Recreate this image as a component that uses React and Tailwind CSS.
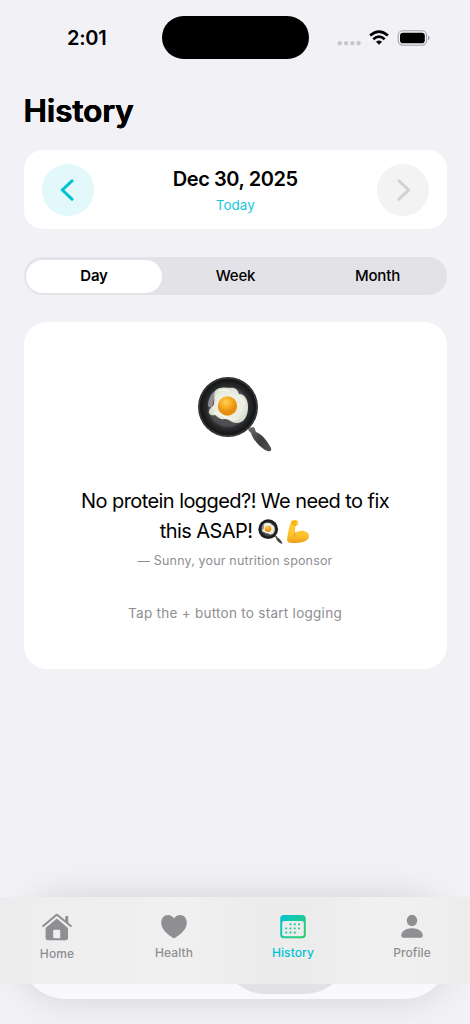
import { useState } from "react";

const periods = [
  { label: "Day", width: "w-[136px]" },
  { label: "Week", width: "w-[147px]" },
  { label: "Month", width: "w-[137px]" },
];

function StatusBar() {
  return (
    <header className="relative flex h-[76px] shrink-0 items-center">
      <span className="ml-[67px] w-[95px] text-[20px] font-semibold leading-none tracking-[-0.3px]">
        2:01
      </span>
      <div className="mt-[-1px] h-[43px] w-[147px] rounded-full bg-black" />
      <svg className="ml-[27px]" width="96" height="20" viewBox="0 0 96 20">
        <g fill="#c5c5c9">
          <rect x="1.7" y="13.2" width="4" height="4" rx="1.4" />
          <rect x="8.1" y="13.2" width="4" height="4" rx="1.4" />
          <rect x="14.4" y="13.2" width="4" height="4" rx="1.4" />
          <rect x="20.6" y="13.2" width="4" height="4" rx="1.4" />
        </g>
        <g fill="none" stroke="#000" strokeWidth="2.7">
          <path d="M34.1 7.5Q43 -0.3 51.9 7.5" />
          <path d="M37.3 11.2Q43 6 48.7 11.2" />
        </g>
        <path d="M40.3 13.7Q43 11.7 45.7 13.7L43 16.5Z" fill="#000" stroke="#000" strokeWidth=".5" strokeLinejoin="round" />
        <rect x="62.2" y="2.8" width="28.4" height="14.4" rx="4.6" fill="none" stroke="#a4a1a8" strokeWidth="1.1" />
        <rect x="64" y="4.7" width="24.8" height="10.6" rx="3.1" fill="#000" />
        <path d="M92.1 7.7v4.6q1.5-.5 1.5-2.3t-1.5-2.3Z" fill="#a09da5" />
      </svg>
    </header>
  );
}

function FryingPan({ className }) {
  return (
    <svg className={className} viewBox="0 0 76 76" fill="none">
      <defs>
        <radialGradient id="pan" cx="50%" cy="50%" r="50%">
          <stop offset="0" stopColor="#77747a" />
          <stop offset=".55" stopColor="#454446" />
          <stop offset=".75" stopColor="#262728" />
          <stop offset=".9" stopColor="#151616" />
          <stop offset="1" stopColor="#303132" />
        </radialGradient>
        <radialGradient id="egg">
          <stop offset="0" stopColor="#f9f8ea" />
          <stop offset=".75" stopColor="#e9ece0" />
          <stop offset="1" stopColor="#d9dfd0" />
        </radialGradient>
        <radialGradient id="yolk" cx="42%" cy="30%">
          <stop offset="0" stopColor="#ffd05a" />
          <stop offset=".6" stopColor="#f8ab20" />
          <stop offset="1" stopColor="#e78e10" />
        </radialGradient>
        <linearGradient id="panHandle" x1="51" y1="54" x2="74" y2="76" gradientUnits="userSpaceOnUse">
          <stop stopColor="#6c6c6d" />
          <stop offset=".5" stopColor="#3b3c3d" />
          <stop offset="1" stopColor="#505152" />
        </linearGradient>
      </defs>
      <path d="M51 50l5 5" stroke="#b8b8b8" strokeWidth="3" />
      <path
        d="M51 54q1-2 5-3c2 0 2 3 3 5 6 2 12 10 15 16 1 4-2 4-6 2-6-4-12-10-14-17Z"
        fill="url(#panHandle)"
      />
      <circle cx="31" cy="31" r="30" fill="url(#pan)" />
      <circle cx="31" cy="31" r="28.8" stroke="#4e4e4f" strokeWidth=".8" opacity=".7" />
      <circle cx="31" cy="31" r="20" fill="#575459" opacity=".65" />
      <path d="M11 30c0-8 4-15 10-17-3 8-5 12-6 19Z" fill="#b7b1b7" opacity=".65" />
      <path
        d="M19 14c3-3 8-3 14-2 5-1 8 2 9 6 6 0 9 6 9 13 0 5-1 9-4 13-3 3-8 4-12 2-3-2-4-3-8-3-4 1-6-2-9-4-4 1-7-1-6-4 1-4 5-4 5-8 1-4-1-9 2-13Z"
        fill="url(#egg)"
      />
      <path d="M22 15q5-2 10 0M40 20q6 2 8 9M17 37q6 0 11 4 7 4 14 1" stroke="#fffff5" strokeWidth="1.3" opacity=".7" />
      <circle cx="30.5" cy="30" r="9.7" fill="url(#yolk)" />
    </svg>
  );
}

function FlexedArm({ className }) {
  return (
    <svg className={className} viewBox="0 0 24 25">
      <defs>
        <linearGradient id="arm" x1="0" y1="0" x2="0" y2="1">
          <stop stopColor="#ffcb38" />
          <stop offset=".65" stopColor="#ffc42e" />
          <stop offset="1" stopColor="#ee9d18" />
        </linearGradient>
      </defs>
      <path
        d="M5.2 2.2C7 .5 9.2.4 11 1.2c1.2.5 1.3 2.6 1.2 4-.1 1.2-1.5 1.6-2.4 1.3-.8 2.3-1.1 5.1-.4 7.5 3-2.7 8.4-3 11.7-.4 2.2 1.9 2.5 5 .4 6.9-4 3.8-12.5 4.2-18.7 2.9-1.6-.4-2-1.7-1.7-3.3C1.9 14.3 2.8 8.1 5.2 2.2Z"
        fill="url(#arm)"
      />
      <path d="M6.5 5.2q2.5-1.8 3.3 1.3M6 3.3q2-.5 4-.6M9.3 14q-1.2 1.2-.8 3" fill="none" stroke="#d98d12" strokeWidth=".8" strokeLinecap="round" />
    </svg>
  );
}

function HomeIcon() {
  return (
    <svg width="32" height="28" viewBox="0 0 32 28">
      <path d="M24.3 3h2.9v7.5l-2.9-2.5Z" fill="#8e8e93" />
      <path d="M2.2 13 15 2.2q.8-.7 1.6 0L29.8 13" fill="none" stroke="#8e8e93" strokeWidth="2.1" strokeLinecap="round" />
      <path
        d="M15.8 5.6 27 14.9V25q0 2.2-2.2 2.2H6.8q-2.2 0-2.2-2.2V14.9ZM12.9 16.8q-.7 0-.7.7v7.7h7v-7.7q0-.7-.7-.7Z"
        fill="#8e8e93"
        fillRule="evenodd"
      />
    </svg>
  );
}

function HeartIcon() {
  return (
    <svg width="28" height="25" viewBox="0 0 28 25">
      <path
        d="M14 24.2c-.7 0-1.4-.6-2.2-1.1C5.2 18.8 1.2 14 1.2 8.5 1.2 4.1 4.2 1 8.1 1c2.5 0 4.6 1.3 5.9 3.6C15.3 2.3 17.4 1 19.9 1c3.9 0 6.9 3.1 6.9 7.5 0 5.5-4 10.3-10.6 14.6-.8.5-1.5 1.1-2.2 1.1Z"
        fill="#8e8e93"
      />
    </svg>
  );
}

function CalendarIcon() {
  const dots = [
    [11.5, 10.2], [15.7, 10.2], [20, 10.2],
    [7.2, 14.3], [11.5, 14.3], [15.7, 14.3], [20, 14.3],
    [7.2, 18.5], [11.5, 18.5], [15.7, 18.5],
  ];
  return (
    <svg width="28" height="25" viewBox="0 0 28 25">
      <defs>
        <linearGradient id="calendar" x1="1" y1="1" x2="27" y2="24" gradientUnits="userSpaceOnUse">
          <stop stopColor="#00c4d8" />
          <stop offset=".65" stopColor="#24cb8d" />
          <stop offset="1" stopColor="#34c95d" />
        </linearGradient>
      </defs>
      <path
        d="M4.8.9h18.4q3.6 0 3.6 3.5v16.3q0 3.5-3.6 3.5H4.8q-3.6 0-3.6-3.5V4.4Q1.2.9 4.8.9ZM5 7Q3.2 7 3.2 8.8v11.7q0 1.7 1.8 1.7h18q1.8 0 1.8-1.7V8.8Q24.8 7 23 7Z"
        fill="url(#calendar)"
        fillRule="evenodd"
      />
      {dots.map(([x, y]) => (
        <rect key={`${x}-${y}`} x={x - 0.9} y={y - 0.9} width="1.9" height="1.9" rx=".5" fill="url(#calendar)" />
      ))}
    </svg>
  );
}

function ProfileIcon() {
  return (
    <svg width="28" height="25" viewBox="0 0 28 25" fill="#8e8e93">
      <ellipse cx="14" cy="6.5" rx="5.2" ry="5.8" />
      <path d="M3.2 21.6c0-3.8 4.5-7.3 10.8-7.3s10.8 3.5 10.8 7.3q0 2.2-2.3 2.2h-17q-2.3 0-2.3-2.2Z" />
    </svg>
  );
}

const tabs = [
  { label: "Home", icon: HomeIcon, place: "left-[27px] top-[15.5px]" },
  { label: "Health", icon: HeartIcon, place: "left-[144px] top-[17px]" },
  { label: "History", icon: CalendarIcon, place: "left-[263px] top-[17px]", active: true },
  { label: "Profile", icon: ProfileIcon, place: "left-[382px] top-[17px]" },
];

function TabBar() {
  return (
    <footer className="absolute inset-x-0 bottom-0 h-[127px]">
      {/* floating capsule behind the bar */}
      <div className="absolute inset-x-[20px] bottom-[25px] h-[102px] rounded-[46px] bg-[#f8f8fd] shadow-[0_0_36px_rgba(0,0,0,0.13)]">
        <div className="absolute bottom-[5px] left-[200px] h-[92px] w-[130px] rounded-[46px] bg-[#e2e2e6]" />
      </div>
      <nav className="absolute inset-x-0 top-0 h-[87px] bg-[linear-gradient(90deg,#ececee_0%,#eeeeef_8%,#f0f0f1_40%,#ececed_54%,#ececed_67%,#f0f0f1_78%,#efeff0_92%,#ececee_100%)]">
        {tabs.map(({ label, icon: Icon, place, active }) => (
          <button key={label} className={`absolute flex w-[60px] flex-col items-center ${place}`}>
            <Icon />
            <span
              className={`mt-[5.5px] text-[12px] font-medium leading-[15px] tracking-[0.1px] ${
                active ? "text-[#00c4d4]" : "text-[#8e8e93]"
              }`}
            >
              {label}
            </span>
          </button>
        ))}
      </nav>
    </footer>
  );
}

export default function App() {
  const [period, setPeriod] = useState("Day");

  return (
    <div className="relative flex h-[1024px] w-[470px] flex-col overflow-hidden bg-[#f2f1f6] font-['Inter','Liberation_Sans',sans-serif] text-black">
      <StatusBar />

      <main className="flex flex-col px-[23.5px]">
        <h1 className="mt-[15px] h-[41px] text-[31.5px] font-semibold leading-[40px] tracking-[-0.05px] [text-shadow:0.35px_0_0_#000,-0.35px_0_0_#000]">
          History
        </h1>

        <section className="mt-[18px] flex h-[79px] items-center justify-between rounded-[19px] bg-white pl-[18.5px] pr-[18px]">
          <button aria-label="Previous day" className="flex size-[52px] items-center justify-center rounded-full bg-[#e2f8fa]">
            <svg className="mr-[3px]" width="14" height="22" viewBox="0 0 14 22" fill="none">
              <path d="M12 1.8 2.3 11l9.7 9.2" stroke="#00c3d2" strokeWidth="3" strokeLinecap="round" strokeLinejoin="round" />
            </svg>
          </button>
          <div className="pt-px text-center">
            <h2 className="text-[20px] font-semibold leading-[26px] tracking-[-0.43px]">Dec 30, 2025</h2>
            <p className="mt-[4.5px] text-[13.5px] leading-[18px] text-[#18c8da]">Today</p>
          </div>
          <button aria-label="Next day" disabled className="flex size-[52px] items-center justify-center rounded-full bg-[#f3f3f3]">
            <svg className="ml-[3px]" width="14" height="22" viewBox="0 0 14 22" fill="none">
              <path d="m2 1.8 9.7 9.2L2 20.2" stroke="#d2d2d3" strokeWidth="3" strokeLinecap="round" strokeLinejoin="round" />
            </svg>
          </button>
        </section>

        <div className="mt-[28px] flex h-[38px] rounded-full bg-[#e3e2e7] p-[2.5px]">
          {periods.map(({ label, width }) => (
            <button
              key={label}
              onClick={() => setPeriod(label)}
              className={`shrink-0 rounded-full pt-px text-[15px] tracking-[-0.15px] ${width} ${
                period === label ? "bg-white font-semibold" : "font-medium"
              }`}
            >
              {label}
            </button>
          ))}
        </div>

        <section className="mt-[27px] flex h-[347px] flex-col items-center rounded-[23px] bg-white">
          <FryingPan className="mt-[54px] size-[76px]" />
          <p className="mt-[34px] text-center text-[20px] leading-[30px] tracking-[-0.57px]">
            No protein logged?! We need to fix
            <br />
            <span className="inline-flex h-[30px] items-center">
              this ASAP!
              <FryingPan className="ml-[6px] size-[25px]" />
              <FlexedArm className="ml-[3px] h-[25px] w-[24px]" />
            </span>
          </p>
          <p className="mt-[4.5px] text-[12.5px] leading-[20px] tracking-[0.17px] text-[#8e8e93]">
            — Sunny, your nutrition sponsor
          </p>
          <p className="mt-[32.5px] text-[13.5px] leading-[20px] tracking-[0.27px] text-[#8e8e93]">
            Tap the + button to start logging
          </p>
        </section>
      </main>

      <TabBar />
    </div>
  );
}
